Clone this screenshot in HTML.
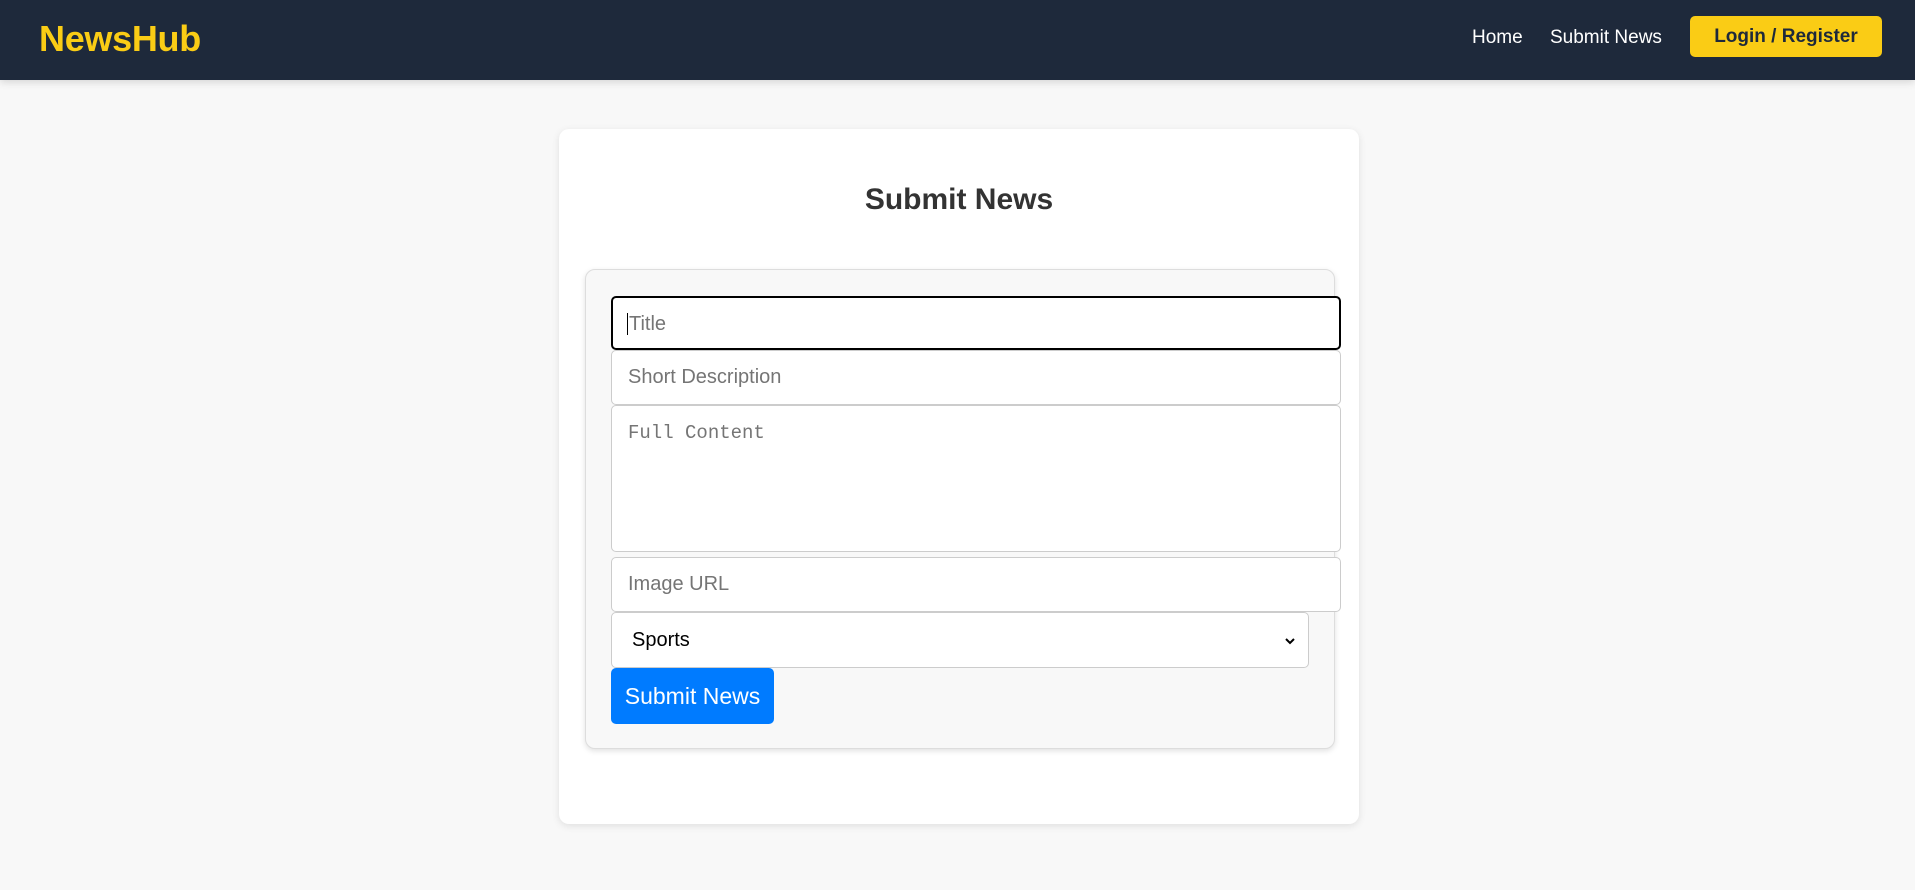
<!DOCTYPE html>
<html><head><meta charset="utf-8"><style>
*{box-sizing:border-box;margin:0;padding:0}
body{width:1915px;height:890px;background:#f8f8f8;font-family:"Liberation Sans",sans-serif;position:relative;overflow:hidden}
.hdr{position:absolute;left:0;top:0;width:1915px;height:80px;background:#1e293b;box-shadow:0 2px 8px rgba(0,0,0,.15)}
.logo{position:absolute;left:39px;top:18px;color:#facc15;font-weight:bold;font-size:36px;letter-spacing:-0.3px}
.nav{position:absolute;top:27px;color:#fff;font-size:19px}
.btn{position:absolute;left:1690px;top:16px;width:192px;height:41px;background:#facc15;border-radius:5px;color:#1e293b;font-weight:bold;font-size:19px;text-align:center;line-height:41px}
.card{position:absolute;left:559px;top:129px;width:800px;height:695px;background:#fff;border-radius:10px;box-shadow:0 2px 8px rgba(0,0,0,.1)}
h2{position:absolute;left:559px;top:183px;width:800px;text-align:center;font-size:30px;color:#333;font-weight:bold}
.form{position:absolute;left:585px;top:269px;width:750px;height:480px;background:#f8f8f8;border:1px solid #ddd;border-radius:10px;box-shadow:0 2px 6px rgba(0,0,0,.12)}
.in{position:absolute;left:611px;width:730px;background:#fff;border:1px solid #ccc;border-radius:5px;font-size:20px;color:#757575;padding-left:16px}
</style></head><body>
<div class="hdr"></div>
<div class="logo">NewsHub</div>
<div class="nav" style="left:1472px">Home</div>
<div class="nav" style="left:1550px">Submit News</div>
<div class="btn">Login / Register</div>
<div class="card"></div>
<h2>Submit News</h2>
<div class="form"></div>
<div class="in" style="top:296px;height:54px;line-height:52px;border:2px solid #000;padding-left:14px"><span style="border-left:1px solid #000;padding-left:1px">Title</span></div>
<div class="in" style="top:350px;height:55px;line-height:53px">Short Description</div>
<div class="in" style="top:405px;height:147px;padding-top:16px;font-family:'Liberation Mono',monospace;font-size:19px">Full Content</div>
<div class="in" style="top:557px;height:55px;line-height:53px">Image URL</div>
<div class="in" style="top:612px;width:698px;height:56px;line-height:54px;color:#000;padding-left:20px">Sports<svg style="position:absolute;right:12px;top:23px" width="12" height="10" viewBox="0 0 12 10"><path d="M2 3l4 4 4-4" fill="none" stroke="#000" stroke-width="2"/></svg></div>
<div style="position:absolute;left:611px;top:668px;width:163px;height:56px;background:#007bff;border-radius:5px;color:#fff;font-size:23px;line-height:56px;text-align:center">Submit News</div>
</body></html>
